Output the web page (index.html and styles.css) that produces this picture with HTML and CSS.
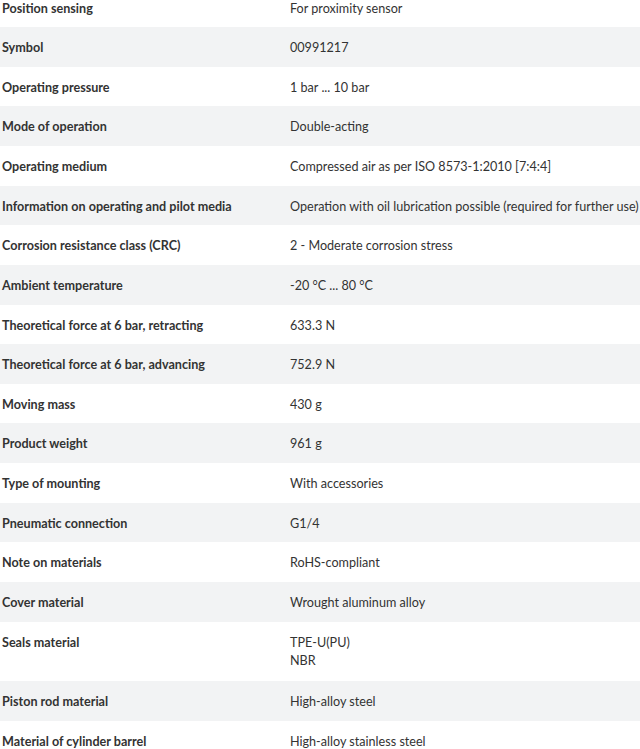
FILE: index.html
```html
<!DOCTYPE html>
<html>
<head>
<meta charset="utf-8">
<link rel="stylesheet" href="styles.css">
</head>
<body>
<div class="specs">
<div class="row"><div class="label">Position sensing</div><div class="value">For proximity sensor</div></div>
<div class="row"><div class="label">Symbol</div><div class="value">00991217</div></div>
<div class="row"><div class="label">Operating pressure</div><div class="value">1 bar ... 10 bar</div></div>
<div class="row"><div class="label">Mode of operation</div><div class="value">Double-acting</div></div>
<div class="row"><div class="label">Operating medium</div><div class="value">Compressed air as per ISO 8573-1:2010 [7:4:4]</div></div>
<div class="row"><div class="label">Information on operating and pilot media</div><div class="value">Operation with oil lubrication possible (required for further use)</div></div>
<div class="row"><div class="label">Corrosion resistance class (CRC)</div><div class="value">2 - Moderate corrosion stress</div></div>
<div class="row"><div class="label">Ambient temperature</div><div class="value">-20 °C ... 80 °C</div></div>
<div class="row"><div class="label">Theoretical force at 6 bar, retracting</div><div class="value">633.3 N</div></div>
<div class="row"><div class="label">Theoretical force at 6 bar, advancing</div><div class="value">752.9 N</div></div>
<div class="row"><div class="label">Moving mass</div><div class="value">430 g</div></div>
<div class="row"><div class="label">Product weight</div><div class="value">961 g</div></div>
<div class="row"><div class="label">Type of mounting</div><div class="value">With accessories</div></div>
<div class="row"><div class="label">Pneumatic connection</div><div class="value">G1/4</div></div>
<div class="row"><div class="label">Note on materials</div><div class="value">RoHS-compliant</div></div>
<div class="row"><div class="label">Cover material</div><div class="value">Wrought aluminum alloy</div></div>
<div class="row row-multi"><div class="label">Seals material</div><div class="value">TPE-U(PU)<br>NBR</div></div>
<div class="row"><div class="label">Piston rod material</div><div class="value">High-alloy steel</div></div>
<div class="row"><div class="label">Material of cylinder barrel</div><div class="value">High-alloy stainless steel</div></div>
</div>
</body>
</html>
```
FILE: styles.css
```css
html, body {
  margin: 0;
  padding: 0;
  background: #ffffff;
  overflow: hidden;
}
.specs {
  margin-top: -12.4px;
  font-family: Lato, "Open Sans", sans-serif;
  font-size: 12.6px;
  line-height: 18px;
  color: #333333;
}
.row {
  display: grid;
  grid-template-columns: 290px 1fr;
  padding: 12px 0 9.64px 0;
}
.row-multi {
  padding-bottom: 11.5px;
}
.row:nth-child(even) {
  background: #f2f3f4;
}
.label {
  padding-left: 2px;
  font-weight: 700;
  white-space: nowrap;
}
.value {
  font-weight: 400;
  white-space: nowrap;
}
```
